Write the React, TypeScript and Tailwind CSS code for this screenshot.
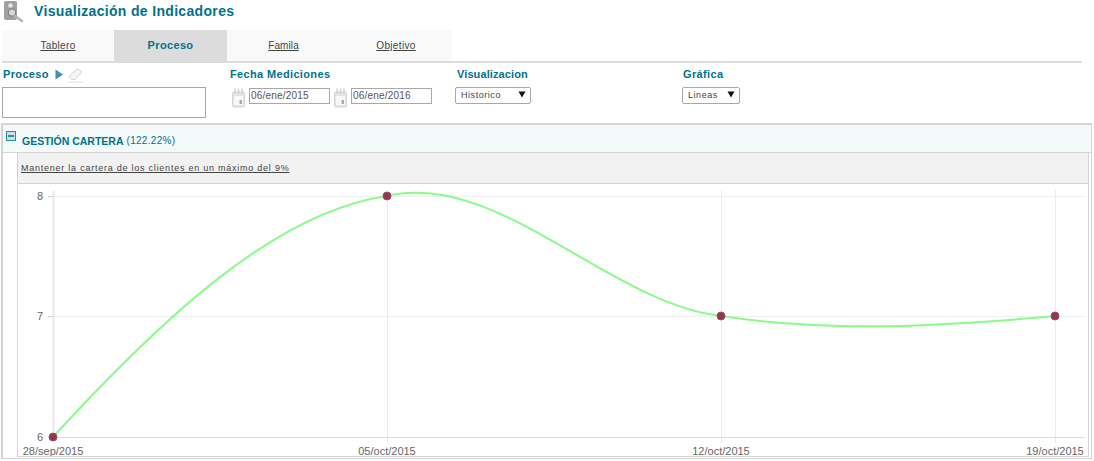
import React from "react";

const Cal = () => (
  <svg width="13" height="20" viewBox="0 0 13 20" className="shrink-0">
    <rect x="0.500" y="4" width="12" height="15" rx="1.500" fill="#e4e4e4" stroke="#d4d4d4" />
    <rect x="2" y="8" width="9" height="9" fill="#f8f8f8" />
    <path d="M3 0.500v5M6.500 0.500v5M10 0.500v5" stroke="#c8c8c8" strokeWidth="1.200" />
    <rect x="7.500" y="12" width="2.500" height="4" fill="#8fb4c4" />
  </svg>
);

const Select = ({ label, w }: { label: string; w: string }) => (
  <div className={`${w} h-[17px] mt-[5px] border border-[#a8a8a8] rounded-[2px] flex items-center justify-between pl-[5px] pr-[4px] text-[9px] tracking-[0.55px] text-[#444]`}>
    <span>{label}</span>
    <svg width="8" height="7" viewBox="0 0 8 7" className="mb-[2px]"><path d="M0.500 0.500h7L4 6.500z" fill="#111" /></svg>
  </div>
);

const Label = ({ children, tight }: { children: React.ReactNode; tight?: boolean }) => (
  <div className={`h-[15px] leading-[15px] text-[11px] font-bold text-[#00728c] ${tight ? "tracking-[0.1px]" : "tracking-[0.35px]"}`}>{children}</div>
);

const tabs: [string, boolean, string][] = [
  ["Tablero", false, "w-[112px] tracking-[0.35px]"],
  ["Proceso", true, "w-[113px]"],
  ["Famila", false, "w-[113px] tracking-[0.1px]"],
  ["Objetivo", false, "w-[112px] tracking-[0.35px]"],
];

export default function App() {
  return (
    <div className="w-[1094px] h-[461px] overflow-hidden bg-white font-['Liberation_Sans',Arial,sans-serif] flex flex-col">
      <div className="h-[30px] flex items-start">
        <svg width="24" height="23" viewBox="0 0 24 23" className="ml-[1px]">
          <path d="M3 3a2 2 0 0 1 2-2h9a2 2 0 0 1 2 2v15a2 2 0 0 1-2 2H5a2 2 0 0 1-2-2z" fill="#a0a0a0" />
          <circle cx="9.500" cy="5.500" r="2.300" fill="#e4e4e4" />
          <circle cx="11" cy="12.500" r="3.700" fill="#d8d8d8" stroke="#808080" strokeWidth="1.200" />
          <path d="M14 16l7 5" stroke="#b4b4b4" strokeWidth="2.500" strokeLinecap="round" />
        </svg>
        <h1 className="ml-[9px] mt-[2px] text-[14px] leading-[18px] font-bold tracking-[0.33px] text-[#00728c]">Visualización de Indicadores</h1>
      </div>
      <div className="mx-[2px] w-[1080px] h-[33px] border-b-2 border-[#dcdcdc] flex">
        {tabs.map(([t, active, cls]) => (
          <div
            key={t}
            className={
              active
                ? `${cls} h-[31px] bg-[#dcdcdc] flex items-center justify-center text-[11px] font-bold tracking-[0.35px] text-[#00728c]`
                : `${cls} h-[31px] bg-[#f9f9f9] flex items-center justify-center text-[10px] underline text-[#444]`
            }
          >
            {t}
          </div>
        ))}
      </div>
      <div className="h-[60px] flex pl-[3px] pt-[4px]">
        <div className="w-[227px]">
          <div className="flex items-center h-[15px]">
            <Label>Proceso</Label>
            <svg width="8" height="11" viewBox="0 0 8 11" className="ml-[6px]"><path d="M0.500 0.500L8 5.500 0.500 10.500z" fill="#3e93a8" /></svg>
            <svg width="17" height="16" viewBox="0 0 17 16" className="ml-[4px]">
              <path d="M2 9.500l8-8 5 3.500-7 7.500H4.500z" fill="#f4f4f4" stroke="#d4d4d4" />
              <path d="M1 15h15" stroke="#e0e0e0" />
            </svg>
          </div>
          <div className="mt-[5px] -ml-[1px] w-[204px] h-[31px] border border-[#a8a8a8]" />
        </div>
        <div className="w-[227px]">
          <Label>Fecha Mediciones</Label>
          <div className="flex items-start mt-[6px] ml-[2px]">
            <Cal />
            <div className="ml-[4px] w-[81px] h-[16px] border border-[#a8a8a8] pl-[1px] text-[10px] leading-[14px] text-[#555] tracking-[0.2px]">06/ene/2015</div>
            <div className="ml-[4px]"><Cal /></div>
            <div className="ml-[4px] w-[81px] h-[16px] border border-[#a8a8a8] pl-[1px] text-[10px] leading-[14px] text-[#555] tracking-[0.2px]">06/ene/2016</div>
          </div>
        </div>
        <div className="w-[226px]">
          <Label tight>Visualizacion</Label>
          <div className="-ml-[2px]"><Select label="Historico" w="w-[76px]" /></div>
        </div>
        <div>
          <Label>Gráfica</Label>
          <div className="-ml-[1px]"><Select label="Lineas" w="w-[58px]" /></div>
        </div>
      </div>
      <div className="ml-[1px] w-[1091px] h-[336px] border-l-2 border-t-2 border-r border-b border-[#d4d4d4] flex flex-col">
        <div className="h-[28px] shrink-0 bg-[#f4f9fa] border-b border-[#d4d4d4] flex pl-[3px]">
          <svg width="10" height="10" viewBox="0 0 10 10" className="mt-[6px]">
            <rect x="0.500" y="0.500" width="9" height="9" fill="#cfe0e4" stroke="#2f8aa0" />
            <path d="M2 5h6" stroke="#00728c" strokeWidth="1.500" />
          </svg>
          <span className="ml-[6px] mt-[10px] text-[10.500px] leading-[12px] font-bold text-[#00728c]">GESTIÓN CARTERA</span>
          <span className="ml-[3px] mt-[10px] text-[10px] leading-[12px] text-[#00728c] tracking-[0.3px]">(122.22%)</span>
        </div>
        <div className="ml-[14px] mr-[2px] h-[304px] shrink-0 border-l border-b border-r border-[#d4d4d4] flex flex-col">
          <div className="h-[31px] shrink-0 bg-[#f2f2f2] border-b border-[#d4d4d4] flex items-center pl-[3px] pt-[1px] text-[9px] tracking-[0.76px] underline text-[#444]">
            Mantener la cartera de los clientes en un máximo del 9%
          </div>
          <svg width="1069" height="272" viewBox="18 184 1069 272" className="block font-['Liberation_Sans',Arial,sans-serif]">
            <path d="M53 196.500H1085M53 316.500H1085" stroke="#efefef" />
            <path d="M387.500 190V443M721.500 190V443M1055.500 190V443" stroke="#ececec" />
            <path d="M53.500 191V437" stroke="#e8e8e8" strokeWidth="2" />
            <path d="M48 196.500h5M48 316.500h5" stroke="#d0d0d0" />
            <path d="M48 437.500H1085" stroke="#dadada" />
            <path
              d="M53 437C164 316 276 212 387 196C498 170 610 304 721 316C832 333 944 326 1055 316"
              fill="none"
              stroke="#8cfb8c"
              strokeWidth="2"
            />
            {[
              [53, 437],
              [387, 196],
              [721, 316],
              [1055, 316],
            ].map(([x, y]) => (
              <circle key={x} cx={x} cy={y} r="4" fill="#8e3a48" stroke="#a04c78" strokeWidth="1" />
            ))}
            {[
              ["8", 196],
              ["7", 316],
              ["6", 437],
            ].map(([t, y]) => (
              <text key={t as string} x="43" y={(y as number) + 4} textAnchor="end" fontSize="11" fill="#666">{t as string}</text>
            ))}
            {[
              ["28/sep/2015", 53],
              ["05/oct/2015", 387],
              ["12/oct/2015", 721],
              ["19/oct/2015", 1055],
            ].map(([t, x]) => (
              <text key={t as string} x={x as number} y="455" textAnchor="middle" fontSize="11" fill="#666">{t as string}</text>
            ))}
          </svg>
        </div>
      </div>
    </div>
  );
}
